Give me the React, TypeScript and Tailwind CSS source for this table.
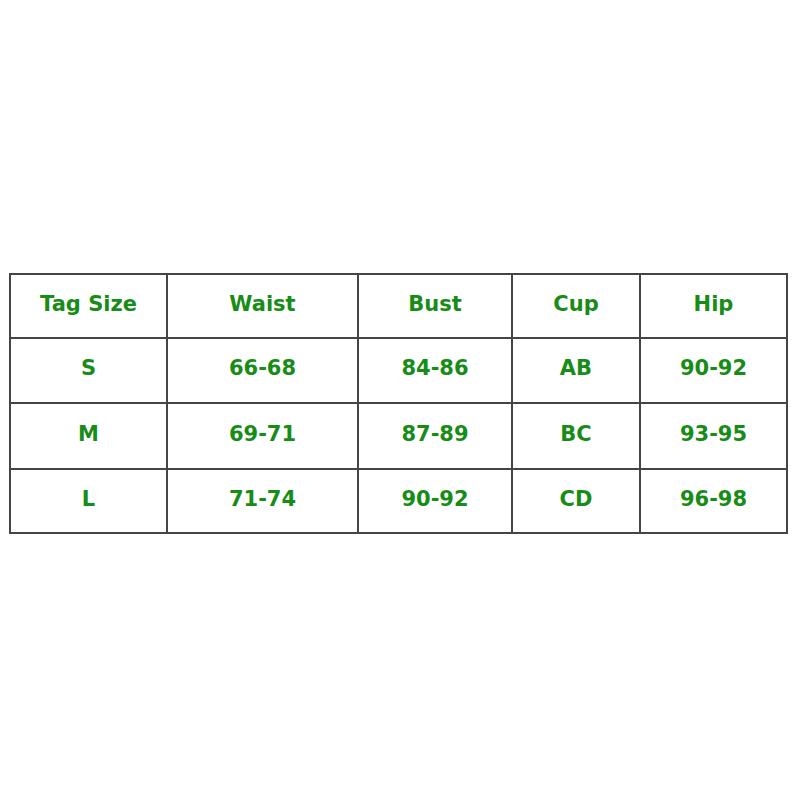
import React from "react";

const rows = [
  ["Tag Size", "Waist", "Bust", "Cup", "Hip"],
  ["S", "66-68", "84-86", "AB", "90-92"],
  ["M", "69-71", "87-89", "BC", "93-95"],
  ["L", "71-74", "90-92", "CD", "96-98"],
];

export default function App() {
  return (
    <div className="w-[800px] h-[800px] bg-white pt-[273px] pl-[9px]">
      <div
        className="inline-grid grid-cols-[155px_189px_152px_126px_145px] grid-rows-[62px_63px_64px_62px] gap-[2px] p-[2px] bg-[#454545]"
        style={{ fontFamily: '"DejaVu Sans", Verdana, sans-serif' }}
      >
        {rows.flat().map((t, i) => (
          <div
            key={i}
            className="bg-white flex items-center justify-center pb-[3px] text-[21px] font-bold text-[#178c17]"
          >
            {t}
          </div>
        ))}
      </div>
    </div>
  );
}
